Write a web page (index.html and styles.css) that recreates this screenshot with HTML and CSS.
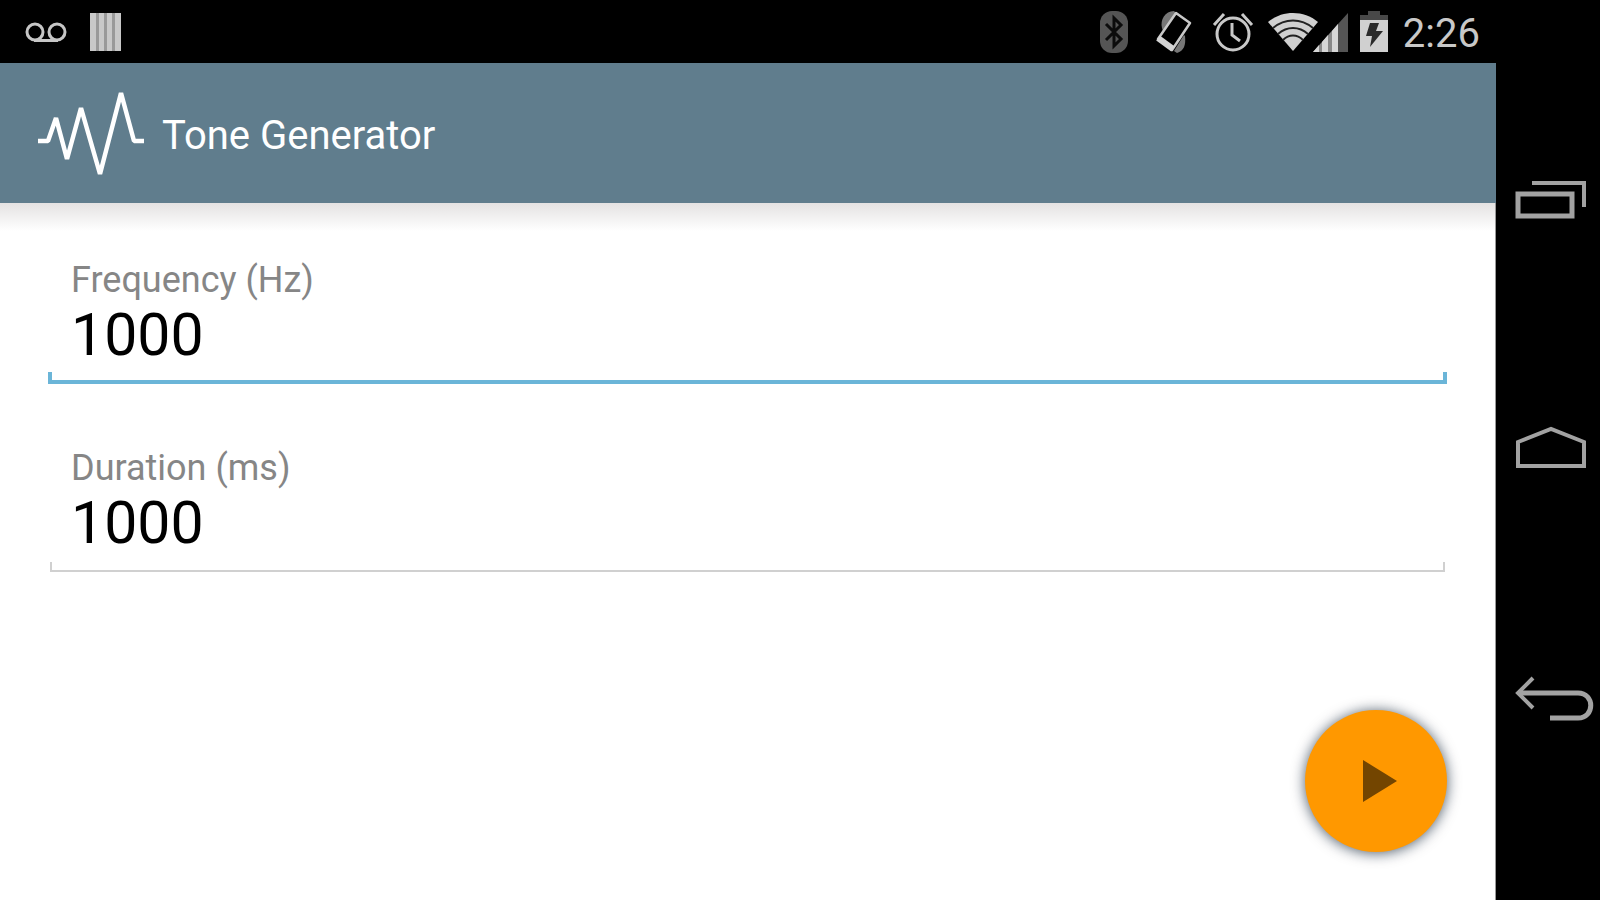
FILE: index.html
```html
<!DOCTYPE html>
<html lang="en">
<head>
    <meta charset="UTF-8">
    <meta name="viewport" content="width=device-width, initial-scale=1.0">
    <title>Tone Generator</title>
    <link rel="stylesheet" href="styles.css">
</head>
<body>
    <div class="screen">
        <div class="status-bar">
            <div class="notifications">
                <!-- voicemail -->
                <svg width="42" height="20" viewBox="0 0 42 20" fill="none" stroke="#c6c6c6" stroke-width="3">
                    <circle cx="10" cy="10" r="8"/>
                    <circle cx="32" cy="10" r="8"/>
                    <path d="M9 18.500H33"/>
                </svg>
                <!-- bars -->
                <svg width="31" height="38" viewBox="0 0 31 38">
                    <path fill="#999" d="M0 0H31V38H0z"/>
                    <path fill="#c8c8c8" d="M0 0H6V38H0zM9 0H14V38H9zM17 0H22V38H17zM25 0H31V38H25z"/>
                </svg>
            </div>
            <div class="system-icons">
                <!-- bluetooth -->
                <svg class="bluetooth" width="28" height="42" viewBox="0 0 28 42">
                    <rect x="0" y="0" width="28" height="42" rx="12" fill="#555"/>
                    <path d="M6 13L21 28L14 35V7L21 14L6 29" fill="none" stroke="#0c0c0c" stroke-width="3"/>
                </svg>
                <!-- vibrate / rotate -->
                <svg class="phone" width="36" height="44" viewBox="0 0 36 44">
                    <path fill="#777" d="M6 18C4 10 9 1 18 1L20 3L7 21zM29 26C30 35 28 41 21 43L18 41L28 25z"/>
                    <path d="M20 3L34 13L16 40L2 29z" fill="#000" stroke="#c8c8c8" stroke-width="2.500" stroke-linejoin="round"/>
                    <path d="M2 28L17 39" stroke="#d4d4d4" stroke-width="6"/>
                </svg>
                <!-- alarm -->
                <svg class="alarm" width="42" height="40" viewBox="0 0 42 40" fill="none" stroke="#c8c8c8" stroke-width="3">
                    <circle cx="21" cy="22" r="16"/>
                    <path d="M20 11V23L28 29M2 13L12 2M40 13L30 2"/>
                </svg>
                <!-- wifi -->
                <svg class="wifi" width="50" height="38" viewBox="0 0 50 38">
                    <path fill="#d0d0d0" d="M25 38L0 9C14 -3 36 -3 50 9z"/>
                    <path fill="none" stroke="#222" stroke-width="2" d="M5 15C17 5 33 5 45 15M10 21C19 13 31 13 40 21M15 27C21 21 29 21 35 27"/>
                </svg>
                <!-- signal -->
                <svg class="signal" width="36" height="40" viewBox="0 0 36 40">
                    <path fill="#888" d="M0 40L25 12V40z"/>
                    <path fill="#d6d6d6" d="M0 40L6 33V40zM9 30L15 23V40H9zM19 19L25 12V40H19z"/>
                    <path fill="#555" d="M25 12L35 1V40H25z"/>
                </svg>
                <!-- battery -->
                <svg class="battery" width="28" height="41" viewBox="0 0 28 41">
                    <path fill="#484848" d="M8 0H20V4H28V9H0V4H8z"/>
                    <path fill="#d0d0d0" d="M0 9H28V41H0z"/>
                    <path fill="#2a2a2a" d="M10 12H19L16 20H23L10 36L12 25H6z"/>
                </svg>
                <span class="clock">2:26</span>
            </div>
        </div>

        <header class="app-bar">
            <svg width="110" height="88" viewBox="0 0 110 88" fill="none" stroke="#fff" stroke-width="4.500">
                <path d="M0 49H10L18 26L29 67L43 16L62 82L83 1L96 49H106" stroke-linejoin="bevel"/>
            </svg>
            <h1>Tone Generator</h1>
        </header>

        <main class="content">
            <div class="field">
                <label for="frequency">Frequency (Hz)</label>
                <input type="text" id="frequency" value="1000" inputmode="numeric">
                <div class="underline active"></div>
            </div>
            <div class="field">
                <label for="duration">Duration (ms)</label>
                <input type="text" id="duration" value="1000" inputmode="numeric">
                <div class="underline"></div>
            </div>
            <button class="play-button" type="button" aria-label="Play">
                <svg width="34" height="42" viewBox="0 0 34 42">
                    <path fill="#734500" d="M0 0L34 21L0 42z"/>
                </svg>
            </button>
        </main>
    </div>

    <nav class="nav-bar">
        <button type="button" aria-label="Recent apps">
            <svg width="104" height="60" viewBox="0 0 104 60" fill="none" stroke="#a2a2a2" stroke-width="5">
                <path d="M22 24H76V46H22z"/>
                <path d="M36 13H88V37" stroke-width="4"/>
            </svg>
        </button>
        <button type="button" aria-label="Home">
            <svg width="104" height="60" viewBox="0 0 104 60" fill="none" stroke="#a2a2a2" stroke-width="4">
                <path d="M22 46V22L55 9L88 22V46z"/>
            </svg>
        </button>
        <button type="button" aria-label="Back">
            <svg width="104" height="60" viewBox="0 0 104 60" fill="none" stroke="#a2a2a2" stroke-width="5">
                <path d="M22 23H82C99 23 99 48 82 48H54"/>
                <path d="M37 8L22 23L37 38" stroke-width="4"/>
            </svg>
        </button>
    </nav>
</body>
</html>
```
FILE: styles.css
```css
* {
    box-sizing: border-box;
}

body {
    font-family: Roboto, Arial, sans-serif;
    margin: 0;
    display: flex;
    min-height: 100vh;
    background-color: #000;
}

svg {
    display: block;
    flex-shrink: 0;
}

.screen {
    flex: 1;
    display: flex;
    flex-direction: column;
}

/* Status bar */
.status-bar {
    display: flex;
    justify-content: space-between;
    align-items: center;
    height: 63px;
    padding: 0 16px 0 25px;
    color: #c8c8c8;
}

.notifications,
.system-icons {
    display: flex;
    align-items: center;
}

.notifications {
    gap: 23px;
}

.phone {
    margin-left: 28px;
}

.alarm {
    margin-left: 20px;
}

.wifi {
    margin-left: 14px;
}

.signal {
    margin-left: -5px; /* the two icons nearly touch */
}

.battery {
    margin-left: 11px;
}

.clock {
    margin-left: 15px;
    font-size: 40px;
    line-height: 48px;
    padding-top: 4px;
}

/* Title bar */
.app-bar {
    display: flex;
    align-items: center;
    gap: 14px;
    height: 140px;
    padding: 5px 38px 0;
    background-color: #607d8d;
    color: #fff;
}

.app-bar h1 {
    margin: 0;
    font-size: 40px;
    line-height: 48px;
    font-weight: 400;
}

/* Form */
.content {
    position: relative;
    flex: 1;
    display: flex;
    flex-direction: column;
    gap: 62px;
    padding: 55px 48px;
    background: linear-gradient(#e4e2e2, #fff 28px);
    border-right: 1px solid #999;
}

.field {
    display: flex;
    flex-direction: column;
}

.field label {
    padding-left: 23px;
    font-size: 36px;
    line-height: 44px;
    color: #868686;
}

.field input {
    width: 100%;
    height: 66px;
    padding: 0 23px;
    border: none;
    outline: none;
    background: transparent;
    font-family: inherit;
    font-size: 59px;
    line-height: 66px;
    color: #000;
}

.underline {
    height: 10px;
    margin: 6px 2px 0;
    border: 2px solid #d0d0d0;
    border-top: none;
}

.underline.active {
    height: 12px;
    margin: 4px 0 0;
    border: 4px solid #6bb5d8;
    border-top: none;
}

.play-button {
    position: absolute;
    right: 48px;
    bottom: 48px;
    display: flex;
    align-items: center;
    justify-content: center;
    width: 142px;
    height: 142px;
    padding: 0 0 0 8px;
    border: none;
    border-radius: 50%;
    background-color: #ff9800;
    box-shadow: 0 1px 14px rgba(0, 20, 40, 0.7);
    cursor: pointer;
}

/* System navigation */
.nav-bar {
    display: flex;
    flex-direction: column;
    justify-content: center;
    width: 104px;
}

.nav-bar button {
    flex: 0 1 250px;
    padding: 0;
    border: none;
    background: none;
    cursor: pointer;
}
```
